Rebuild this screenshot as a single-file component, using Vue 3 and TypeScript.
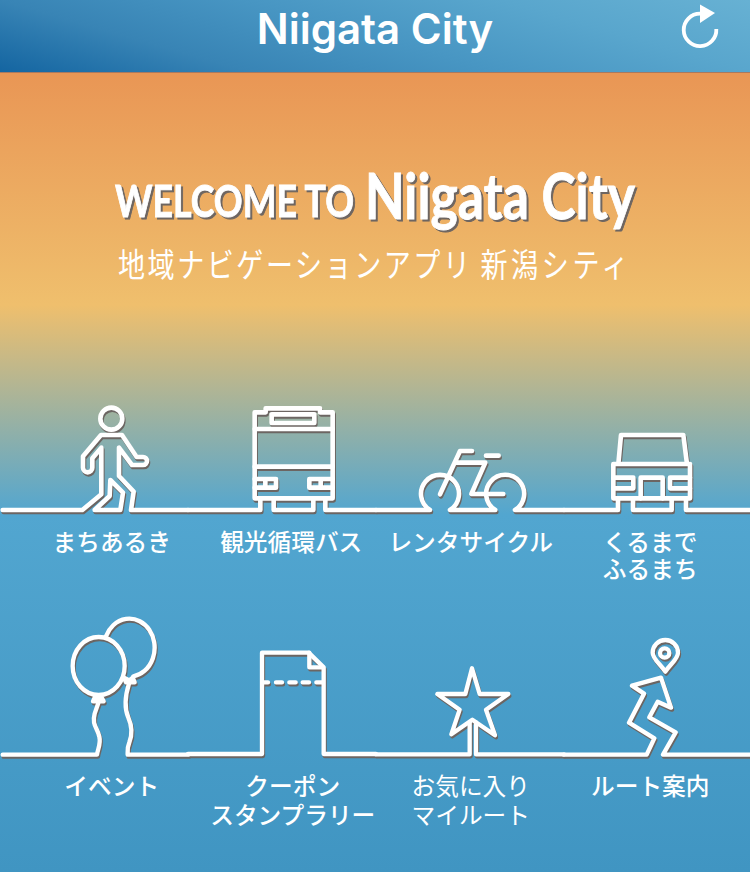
<script setup lang="ts">
interface MenuItem {
  id: string
  lines: string[]
  width: number
  paths: string[]
  light?: boolean
}

const upper: MenuItem[] = [
  {
    id: 'walk',
    lines: ['まちあるき'],
    width: 564,
    paths: [
      'M8 345H247L304 298V158L277 190V218A14 14 0 0 1 249 218V184L303 120H366L410 186H429A12 12 0 0 1 429 210H396L357 158V243L401 290L393 345H564',
      'M284 345L329 303L331 255L369 293L361 345Z',
      'M367 71A33 33 0 1 1 301 71A33 33 0 1 1 367 71Z',
    ],
  },
  {
    id: 'bus',
    lines: ['観光循環バス'],
    width: 564,
    paths: [
      'M0 345H217V310M257 312V345H376V312M412 312V345H564',
      'M233 40H396V52H434V310H200V52H233Z',
      'M251 58H379V84H251ZM200 102H434M200 215H434',
      'M200 252H264V278H200M232 252V278M434 252H364V278H434M398 252V278',
    ],
  },
  {
    id: 'cycle',
    lines: ['レンタサイクル'],
    width: 564,
    paths: [
      'M0 345H162A57 57 0 1 1 222 345H358A57 57 0 1 1 417 345H564',
      'M192 298L252 168H288M240 203H328L286 297H382M330 182H368',
    ],
  },
  {
    id: 'car',
    lines: ['くるまで', 'ふるまち'],
    width: 558,
    paths: [
      'M0 345H162V310M207 312V345H323V312M366 312V345H558',
      'M148 207H378V310H148ZM163 207L171 120H358L369 207',
      'M148 248H208V280H148M378 248H318V280H378M230 310V248H296V310',
    ],
  },
]

const lower: MenuItem[] = [
  {
    id: 'event',
    lines: ['イベント'],
    width: 564,
    paths: [
      'M374 183A78 87 0 1 1 218 183A78 87 0 1 1 374 183Z',
      'M318 94A76 87 0 1 1 400 214',
      'M279 289L285 276L294 284L304 276L311 289ZM372 218L378 232H404L398 218L388 226Z',
      'M8 449H291C294 430 303 416 298 395C292 368 275 360 284 326L295 294',
      'M387 236C373 280 373 310 385 338C399 370 396 392 388 412C381 428 383 440 383 449H564',
    ],
  },
  {
    id: 'coupon',
    lines: ['クーポン', 'スタンプラリー'],
    width: 564,
    paths: [
      'M0 447H222V143H362L407 187V447H564',
      'M364 143V187H405',
      'M228 232H240M264 232H282M304 232H323M344 232H363M385 232H402',
    ],
  },
  {
    id: 'favorite',
    lines: ['お気に入り', 'マイルート'],
    width: 564,
    light: true,
    paths: [
      'M288 190L311 267H397L330 314L357 391L289 344L226 388L251 314L184 267H268Z',
      'M0 448H281V352M300 352V448H564',
    ],
  },
  {
    id: 'route',
    lines: ['ルート案内'],
    width: 558,
    paths: [
      'M0 449H248L271 400L195 353L240 266L204 242L291 218L321 308L281 290L256 337L335 382L297 449H558',
      'M304 200C290 178 266 162 266 143A38 38 0 0 1 342 143C342 162 318 178 304 200Z',
      'M316 144A14 14 0 1 1 288 144A14 14 0 1 1 316 144Z',
    ],
  },
]

const rows = [
  { key: 'upper', items: upper, height: 390 },
  { key: 'lower', items: lower, height: 495 },
]
</script>

<template>
  <div class="app">
    <header class="bar">
      <span></span>
      <h1>Niigata City</h1>
      <button class="reload" aria-label="reload">
        <svg viewBox="0 0 44 52" width="44" height="52">
          <path class="ring" d="M22 13.7A16.3 16.2 0 1 0 38.3 29" />
          <path class="tip" d="M22 4.5L37 13L22 23Z" />
        </svg>
      </button>
    </header>

    <main>
      <svg class="hero" viewBox="0 0 750 322" width="750" height="322">
        <g class="logo">
          <text x="115" y="144" class="welcome" textLength="239" lengthAdjust="spacingAndGlyphs">WELCOME TO</text>
          <text x="365" y="146" class="city" textLength="270" lengthAdjust="spacingAndGlyphs">Niigata City</text>
        </g>
        <g transform="translate(118 0) scale(.82 1)">
          <text y="204" class="sub"><tspan x="0" class="app-kind">地域ナビゲーションアプリ</tspan> <tspan x="442" class="app-name">新潟シティ</tspan></text>
        </g>
      </svg>

      <section v-for="row in rows" :key="row.key" :class="['row', row.key]">
        <div class="icons">
          <svg v-for="item in row.items" :key="item.id" :viewBox="`0 0 ${item.width} ${row.height}`">
            <path v-for="(d, i) in item.paths" :key="i" :d="d" />
          </svg>
        </div>
        <div class="labels">
          <p v-for="item in row.items" :key="item.id" :class="[item.id, { light: item.light }]">
            <span v-for="line in item.lines" :key="line">{{ line }}</span>
          </p>
        </div>
      </section>
    </main>
  </div>
</template>

<style>
body {
  margin: 0;
}
</style>

<style scoped>
.app {
  width: 750px;
  height: 872px;
  overflow: hidden;
  color: #fff;
  font-family: "Noto Sans CJK JP", sans-serif;
}
.bar {
  box-sizing: border-box;
  height: 73px;
  display: grid;
  grid-template-columns: 1fr auto 1fr;
  border-bottom: 1px solid #a9795f;
  background: linear-gradient(16deg, #1465a1 0%, #3884b5 25%, #4896c3 50%, #59a6cd 75%, #67b1d3 100%);
}
h1 {
  margin: 4px 0 0;
  font: 600 42px/50px Inter, sans-serif;
  letter-spacing: 0;
}
.reload {
  justify-self: end;
  width: 44px;
  height: 52px;
  margin-right: 28px;
  padding: 0;
  border: 0;
  background: none;
}
.reload svg {
  display: block;
}
.ring {
  fill: none;
  stroke: #fff;
  stroke-width: 3.8;
}
.tip {
  fill: #fff;
}
main {
  height: 799px;
  background: linear-gradient(#e99655 0, #efbf6d 232px, #52a6d0 442px, #4095c2 799px);
}
.hero {
  display: block;
}
.hero text {
  fill: #fff;
}
.logo {
  font-family: Lato, sans-serif;
  font-weight: 700;
  stroke: #fff;
  stroke-width: 0.9;
  filter: drop-shadow(2px 2.5px 0.5px #6d6561);
}
.welcome {
  font-size: 44px;
}
.city {
  font-size: 64px;
}
.sub {
  font-size: 33px;
  font-weight: 400;
}
.app-kind {
  letter-spacing: 3.1px;
}
.app-name {
  letter-spacing: 4.4px;
}
.icons {
  display: grid;
  grid-template-columns: 188px 188px 188px 186px;
  filter: drop-shadow(1.9px 2.9px 0.4px #6c6562);
}
.icons svg {
  display: block;
  width: 100%;
  overflow: visible;
  fill: none;
  stroke: #fff;
  stroke-width: 13.8;
  stroke-linejoin: round;
}
.lower .icons svg {
  stroke-width: 13;
}
.icons path {
  stroke-linecap: round;
}
.upper .icons {
  height: 130px;
}
.lower .icons {
  height: 165px;
}
.labels {
  display: grid;
  grid-template-columns: repeat(4, 179.5px);
  padding-left: 22px;
}
.labels p {
  display: flex;
  flex-direction: column;
  align-items: center;
  margin: 0;
  font-size: 23.7px;
  font-weight: 500;
  line-height: 27px;
  white-space: nowrap;
}
.labels .light {
  font-weight: 400;
}
.labels .coupon {
  padding-left: 3px;
}
.upper {
  height: 210px;
}
.upper .labels {
  padding-top: 3px;
}
.lower .labels {
  padding-top: 1px;
}
.lower .labels p {
  line-height: 29px;
}
</style>
